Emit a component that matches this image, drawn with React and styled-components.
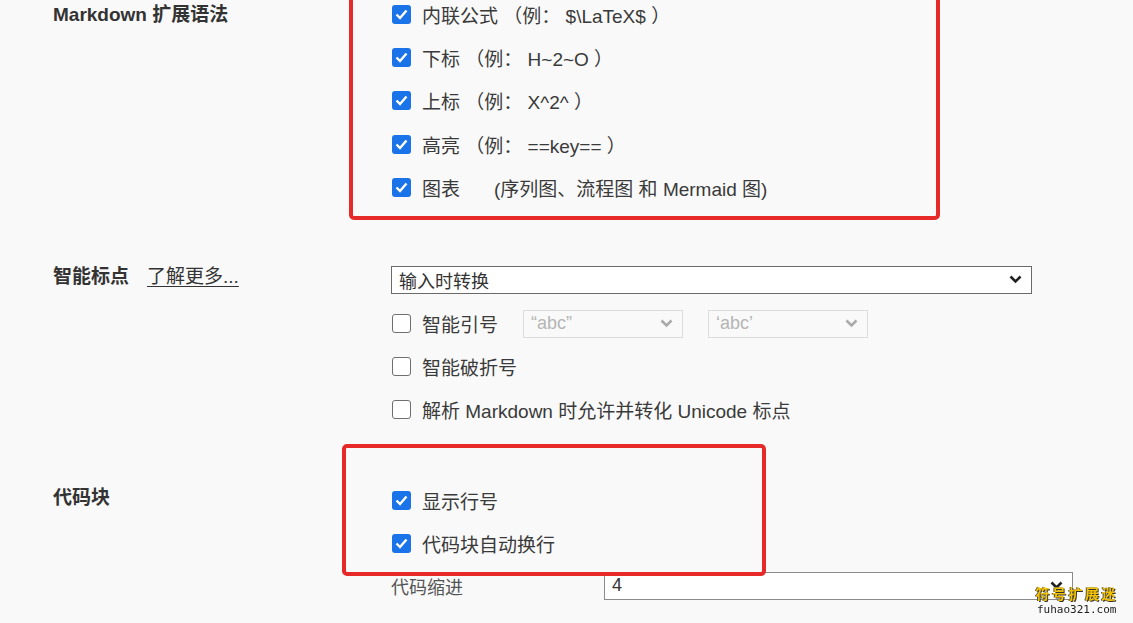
import React from "react";
import styled, { createGlobalStyle } from "styled-components";

const extensions = [
  { label: "内联公式", note: " （例： $\\LaTeX$ ）" },
  { label: "下标", note: " （例： H~2~O ）" },
  { label: "上标", note: " （例： X^2^ ）" },
  { label: "高亮", note: " （例： ==key== ）" },
  { label: "图表", note: "(序列图、流程图 和 Mermaid 图)", wide: true },
];

const Chevron = ({ color = "#222" }) => (
  <svg width="13" height="9" viewBox="0 0 13 9">
    <path d="M1.5 1.5l5 5 5-5" fill="none" stroke={color} strokeWidth="2.6" />
  </svg>
);

const Check = ({ checked }) => (
  <Box $checked={checked}>
    {checked && (
      <svg width="13" height="11" viewBox="0 0 13 11">
        <path d="M1.5 5.5l3.5 3.5 6.5-7.5" fill="none" stroke="#fff" strokeWidth="2.4" />
      </svg>
    )}
  </Box>
);

const App = () => {
  return (
    <>
      <GlobalStyle />
      <Page>
        <Section $gap={-7.5}>
          <SectionLabel $lh={43}>Markdown 扩展语法</SectionLabel>
          <Content>
            {extensions.map((item) => (
              <CheckRow key={item.label} $h={43.3}>
                <Check checked />
                {item.label}
                <Note $wide={item.wide}>{item.note}</Note>
              </CheckRow>
            ))}
            <Annotation $top={-32.5} $left={-42} $w={591} $h={260} />
          </Content>
        </Section>

        <Section $gap={57}>
          <SectionLabel $lh={22}>
            智能标点
            <LearnMore>了解更多...</LearnMore>
          </SectionLabel>
          <Content>
            <Select $w={641}>
              输入时转换
              <Chevron />
            </Select>
            <CheckRow $h={43} $first>
              <Check />
              智能引号
              <QuoteSelects>
                <Select $w={160} $disabled>
                  “abc”
                  <Chevron color="#aaa" />
                </Select>
                <Select $w={160} $disabled>
                  ‘abc’
                  <Chevron color="#aaa" />
                </Select>
              </QuoteSelects>
            </CheckRow>
            <CheckRow $h={43}>
              <Check />
              智能破折号
            </CheckRow>
            <CheckRow $h={43}>
              <Check />
              解析 Markdown 时允许并转化 Unicode 标点
            </CheckRow>
          </Content>
        </Section>

        <Section $gap={48}>
          <SectionLabel $lh={37}>代码块</SectionLabel>
          <Content>
            <CheckRow $h={43}>
              <Check checked />
              显示行号
            </CheckRow>
            <CheckRow $h={43}>
              <Check checked />
              代码块自动换行
            </CheckRow>
            <IndentRow>
              <IndentLabel>代码缩进</IndentLabel>
              <Select $w={469} $soft>
                4
                <Chevron />
              </Select>
            </IndentRow>
            <Annotation $top={-35.5} $left={-49} $w={424} $h={132} />
          </Content>
        </Section>
      </Page>
      <Watermark>
        <WatermarkTitle>符号扩展迷</WatermarkTitle>
        <WatermarkUrl>fuhao321.com</WatermarkUrl>
      </Watermark>
    </>
  );
};

const GlobalStyle = createGlobalStyle`
  html, body {
    margin: 0;
    height: 100%;
    overflow: hidden;
    background: #f9f9f9;
    font-family: "Liberation Sans", "Noto Sans CJK SC", sans-serif;
  }
`;

const Page = styled.main`
  padding-left: 53px;
`;

const Section = styled.section`
  display: grid;
  grid-template-columns: 338px 700px;
  align-items: start;
  margin-top: ${({ $gap }) => $gap}px;
`;

const SectionLabel = styled.div`
  display: flex;
  gap: 18px;
  font-size: 19px;
  font-weight: 700;
  color: #333;
  line-height: ${({ $lh }) => $lh}px;
`;

const LearnMore = styled.a`
  font-weight: 400;
  color: #333;
  text-decoration: underline;
  text-underline-offset: 3px;
`;

const Content = styled.div`
  position: relative;
  display: flex;
  flex-direction: column;
  align-items: flex-start;
`;

const Annotation = styled.div`
  position: absolute;
  top: ${({ $top }) => $top}px;
  left: ${({ $left }) => $left}px;
  width: ${({ $w }) => $w}px;
  height: ${({ $h }) => $h}px;
  box-sizing: border-box;
  border: 4px solid #e62a2a;
  border-radius: 5px;
  pointer-events: none;
`;

const CheckRow = styled.label`
  display: flex;
  align-items: center;
  height: ${({ $h }) => $h}px;
  margin-top: ${({ $first }) => ($first ? "8.5px" : "0")};
  padding-left: 1px;
  font-size: 19px;
  color: #3a3a3a;
  white-space: pre;
`;

const Box = styled.span`
  box-sizing: border-box;
  flex-shrink: 0;
  width: 19px;
  height: 19px;
  margin-right: 11px;
  border-radius: 3px;
  display: flex;
  align-items: center;
  justify-content: center;
  background: ${({ $checked }) => ($checked ? "#1a73e8" : "#fff")};
  border: ${({ $checked }) => ($checked ? "none" : "1.5px solid #6f6f6f")};
`;

const Note = styled.span`
  margin-left: ${({ $wide }) => ($wide ? "34px" : "0")};
`;

const QuoteSelects = styled.div`
  display: flex;
  gap: 25px;
  margin-left: 25px;
`;

const Select = styled.div`
  box-sizing: border-box;
  flex-shrink: 0;
  width: ${({ $w }) => $w}px;
  height: 28px;
  padding: 0 9px 0 7px;
  display: flex;
  align-items: center;
  justify-content: space-between;
  font-size: 18px;
  color: ${({ $disabled }) => ($disabled ? "#b5b5b5" : "#333")};
  background: ${({ $disabled }) => ($disabled ? "#f9f9f9" : "#fff")};
  border: 1px solid
    ${({ $disabled, $soft }) => ($disabled ? "#dcdcdc" : $soft ? "#8a8a8a" : "#6a6a6a")};
  border-width: ${({ $disabled }) => ($disabled ? "1px" : "1.5px")};
`;

const IndentRow = styled.div`
  display: flex;
  align-items: center;
  margin-top: 6.5px;
`;

const IndentLabel = styled.span`
  flex-shrink: 0;
  width: 213px;
  font-size: 18px;
  color: #555;
`;

const Watermark = styled.div`
  position: fixed;
  right: 15px;
  bottom: 8px;
  display: flex;
  flex-direction: column;
  align-items: center;
  line-height: 1;
`;

const WatermarkTitle = styled.span`
  font-family: "Noto Sans CJK SC", sans-serif;
  font-size: 14px;
  font-weight: 700;
  letter-spacing: 2.5px;
  color: #f2c200;
  text-shadow: 1px 1px 0 #333, -1px 0 0 #555;
`;

const WatermarkUrl = styled.span`
  margin-top: 4px;
  font-family: "DejaVu Sans Mono", monospace;
  font-size: 11px;
  color: #222;
`;

export default App;
